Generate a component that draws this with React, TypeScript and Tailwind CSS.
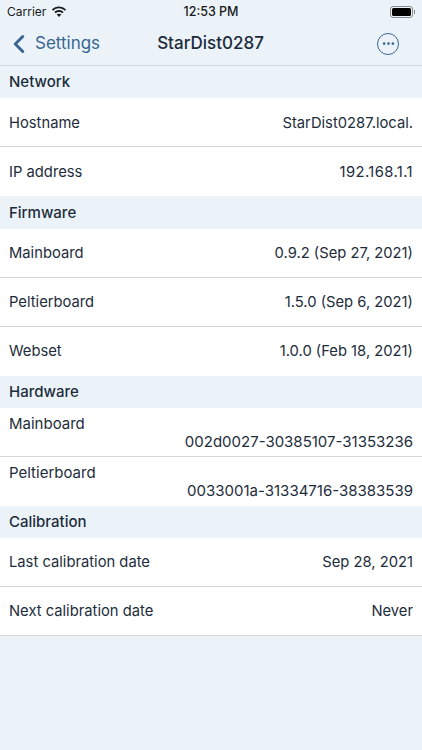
import { ChevronLeft, Ellipsis } from 'lucide-react'

const sections = [
  {
    title: 'Network',
    rows: [
      { label: 'Hostname', value: 'StarDist0287.local.' },
      { label: 'IP address', value: '192.168.1.1', valueClass: 'tracking-[0.4px]' },
    ],
  },
  {
    title: 'Firmware',
    rows: [
      { label: 'Mainboard', value: '0.9.2 (Sep 27, 2021)' },
      { label: 'Peltierboard', value: '1.5.0 (Sep 6, 2021)' },
      { label: 'Webset', value: '1.0.0 (Feb 18, 2021)' },
    ],
  },
  {
    title: 'Hardware',
    stacked: true,
    rows: [
      { label: 'Mainboard', value: '002d0027-30385107-31353236' },
      { label: 'Peltierboard', value: '0033001a-31334716-38383539' },
    ],
  },
  {
    title: 'Calibration',
    closed: true,
    rows: [
      { label: 'Last calibration date', value: 'Sep 28, 2021' },
      { label: 'Next calibration date', value: 'Never' },
    ],
  },
]

function Wifi() {
  return (
    <svg width="16" height="12" viewBox="0 0 16 12" fill="#1a1a1a">
      <path d="M8 2.3c2.2 0 4.3.9 5.900 2.400l1.200-1.300A10.300 10.300 0 0 0 8 .5C5.300.5 2.800 1.600.900 3.400l1.200 1.300A8.500 8.500 0 0 1 8 2.300z" />
      <path d="M8 5.900c1.200 0 2.400.5 3.300 1.300l1.300-1.300A6.700 6.700 0 0 0 8 4.100c-1.700 0-3.300.7-4.600 1.800l1.300 1.300c.9-.8 2.100-1.300 3.300-1.300z" />
      <path d="M8 7.700c-.9 0-1.700.3-2.300.9L8 11l2.300-2.400c-.6-.6-1.400-.9-2.300-.9z" />
    </svg>
  )
}

export default function App() {
  return (
    <div
      className="w-[422px] h-[750px] overflow-hidden bg-[#ebf3f9] text-[#1d2c3b]"
      style={{ fontFamily: 'Inter, "Liberation Sans", sans-serif' }}
    >
      {/* Status bar */}
      <div className="h-[22px] relative flex items-center justify-between px-[7px] pt-[2px] text-[#1a1a1a]">
        <div className="flex items-center gap-[5px] text-[12px]">
          Carrier <Wifi />
        </div>
        <div className="absolute left-0 right-0 text-center text-[12.5px] font-medium">12:53 PM</div>
        <div className="flex items-center">
          <div className="w-[23px] h-[12px] rounded-[3px] border border-[#8a8a8a] p-[1px]">
            <div className="w-full h-full rounded-[1.5px] bg-black" />
          </div>
          <div className="w-[1px] h-[4px] bg-[#8a8a8a] ml-[1px]" />
        </div>
      </div>

      {/* Nav bar */}
      <div className="h-[44px] relative flex items-center justify-between border-b border-[#cfd8df]">
        <div className="flex items-center text-[#3a6692]">
          <ChevronLeft size={30} strokeWidth={2.4} className="ml-[4px]" />
          <span className="text-[17px] ml-[1px]">Settings</span>
        </div>
        <div className="absolute left-0 right-[1px] text-center text-[17px] font-medium">StarDist0287</div>
        <div className="w-[22px] h-[22px] mr-[23px] rounded-full border border-[#3a6692] flex items-center justify-center text-[#3a6692]">
          <Ellipsis size={15} strokeWidth={2.4} />
        </div>
      </div>

      {sections.map(section => (
        <div key={section.title}>
          <div className="h-[32.25px] flex items-center px-[9px] pt-[1px] text-[15px] font-[450]">{section.title}</div>
          <div className="bg-white">
            {section.rows.map((row, i) => {
              const border = i < section.rows.length - 1 || section.closed ? 'border-b border-[#d6d6d6]' : ''
              return section.stacked ? (
                <div key={row.label} className={`h-[49px] px-[9px] pt-[7px] text-[15px] ${border}`}>
                  <div className="leading-[18px]">{row.label}</div>
                  <div className="leading-[18px] text-right">{row.value}</div>
                </div>
              ) : (
                <div key={row.label} className={`h-[49px] px-[9px] pt-[1px] flex items-center justify-between text-[14.75px] ${border}`}>
                  <span>{row.label}</span>
                  <span className={row.valueClass}>{row.value}</span>
                </div>
              )
            })}
          </div>
        </div>
      ))}
    </div>
  )
}
